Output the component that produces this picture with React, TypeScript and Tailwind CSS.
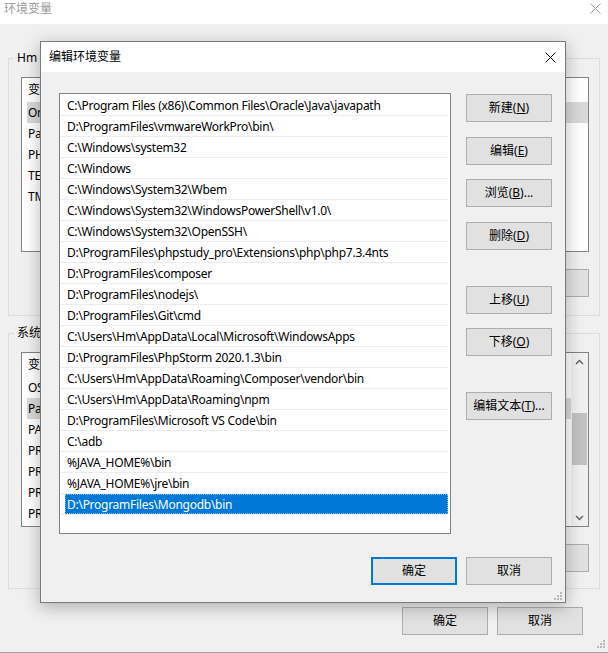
import React from 'react';

const paths = [
  'C:\\Program Files (x86)\\Common Files\\Oracle\\Java\\javapath',
  'D:\\ProgramFiles\\vmwareWorkPro\\bin\\',
  'C:\\Windows\\system32',
  'C:\\Windows',
  'C:\\Windows\\System32\\Wbem',
  'C:\\Windows\\System32\\WindowsPowerShell\\v1.0\\',
  'C:\\Windows\\System32\\OpenSSH\\',
  'D:\\ProgramFiles\\phpstudy_pro\\Extensions\\php\\php7.3.4nts',
  'D:\\ProgramFiles\\composer',
  'D:\\ProgramFiles\\nodejs\\',
  'D:\\ProgramFiles\\Git\\cmd',
  'C:\\Users\\Hm\\AppData\\Local\\Microsoft\\WindowsApps',
  'D:\\ProgramFiles\\PhpStorm 2020.1.3\\bin',
  'C:\\Users\\Hm\\AppData\\Roaming\\Composer\\vendor\\bin',
  'C:\\Users\\Hm\\AppData\\Roaming\\npm',
  'D:\\ProgramFiles\\Microsoft VS Code\\bin',
  'C:\\adb',
  '%JAVA_HOME%\\bin',
  '%JAVA_HOME%\\jre\\bin',
  'D:\\ProgramFiles\\Mongodb\\bin',
];

const userVars = ['OneDrive', 'Path', 'PHPSTORM', 'TEMP', 'TMP'];
const sysVars = ['OS', 'Path', 'PATHEXT', 'PROCESSOR_ARCHITECTURE', 'PROCESSOR_IDENTIFIER', 'PROCESSOR_LEVEL', 'PROCESSOR_REVISION'];

const CloseIcon: React.FC<{ className?: string }> = ({ className }) => (
  <svg className={className} width="11" height="11" viewBox="0 0 11 11" fill="none" stroke="currentColor" strokeWidth="1">
    <path d="M0.5 0.5L10.5 10.5M10.5 0.5L0.5 10.5" />
  </svg>
);

const Grip: React.FC = () => (
  <svg width="9" height="9" viewBox="0 0 9 9" className="text-[#b8b8b8]" fill="currentColor">
    <rect x="6" y="0" width="2" height="2" />
    <rect x="3" y="3" width="2" height="2" />
    <rect x="6" y="3" width="2" height="2" />
    <rect x="0" y="6" width="2" height="2" />
    <rect x="3" y="6" width="2" height="2" />
    <rect x="6" y="6" width="2" height="2" />
  </svg>
);

const WinButton: React.FC<{ children: React.ReactNode; className?: string; focused?: boolean }> = ({ children, className = '', focused }) => (
  <div
    className={`w-[86px] h-[28px] flex items-center justify-center bg-[#e1e1e1] text-[12px] text-black ${
      focused ? 'border-2 border-[#0078d7]' : 'border border-[#adadad]'
    } ${className}`}
  >
    {children}
  </div>
);

const VarList: React.FC<{ items: string[]; selected: number; scroll?: boolean }> = ({ items, selected, scroll }) => (
  <div className="h-[175px] bg-white border border-[#828282] flex overflow-hidden">
    <div className="flex-1 flex flex-col">
      <div className="h-[24px] flex items-center pl-[6px] text-[12px]">变量</div>
      {items.map((v, i) => (
        <div key={v + i} className="h-[21px] flex">
          <div className={`ml-[5px] flex-1 flex items-center pl-[1px] text-[12px] tracking-[-0.27px] ${i === selected ? 'bg-[#d9d9d9]' : ''}`}>{v}</div>
        </div>
      ))}
    </div>
    {scroll && (
      <div className="w-[17px] bg-[#f0f0f0] flex flex-col items-center">
        <div className="h-[17px] flex items-center justify-center text-[#606060]">
          <svg width="9" height="6" viewBox="0 0 9 6" fill="none" stroke="currentColor" strokeWidth="1.4"><path d="M1 5L4.5 1.5L8 5" /></svg>
        </div>
        <div className="mt-[43px] w-[15px] h-[52px] bg-[#c2c2c2]" />
        <div className="flex-1" />
        <div className="h-[17px] flex items-center justify-center text-[#606060]">
          <svg width="9" height="6" viewBox="0 0 9 6" fill="none" stroke="currentColor" strokeWidth="1.4"><path d="M1 1L4.5 4.5L8 1" /></svg>
        </div>
      </div>
    )}
  </div>
);

const GroupBox: React.FC<{ legend: string; children: React.ReactNode; className?: string }> = ({ legend, children, className = '' }) => (
  <div className={`relative border border-[#dcdcdc] pl-[12px] pr-[10px] pt-[18px] ${className}`}>
    <span className="absolute -top-[9px] left-[5px] px-[3px] bg-[#f0f0f0] text-[12px] leading-[16px]">{legend}</span>
    {children}
  </div>
);

const App: React.FC = () => {
  return (
    <div className="relative w-[608px] h-[653px] overflow-hidden bg-[#f0f0f0] text-black font-['Noto_Sans','Noto_Sans_CJK_SC',sans-serif] border-b border-[#a0a0a0]">
      {/* parent window */}
      <div className="h-[24px] bg-white flex items-start justify-between pl-[4px] pr-[7px]">
        <span className="mt-[1px] text-[12px] leading-[16px] text-[#9a9a9a]">环境变量</span>
        <CloseIcon className="mt-[3px] text-[#9a9a9a]" />
      </div>
      <div className="px-[8px]">
        <GroupBox legend="Hm 的用户变量(U)" className="mt-[34px] pb-[18px]">
          <VarList items={userVars} selected={0} />
          <div className="mt-[17px] flex justify-end gap-[9px]">
            <WinButton className="h-[27px]">新建(<u>N</u>)...</WinButton>
            <WinButton className="h-[27px]">编辑(<u>E</u>)...</WinButton>
            <WinButton className="h-[27px]">删除(<u>D</u>)</WinButton>
          </div>
        </GroupBox>
        <GroupBox legend="系统变量(S)" className="mt-[17px] pb-[16px]">
          <VarList items={sysVars} selected={1} scroll />
          <div className="mt-[17px] flex justify-end gap-[9px]">
            <WinButton>新建(<u>W</u>)...</WinButton>
            <WinButton>编辑(<u>I</u>)...</WinButton>
            <WinButton>删除(<u>L</u>)</WinButton>
          </div>
        </GroupBox>
        <div className="mt-[18px] pr-[17px] flex justify-end gap-[9px]">
          <WinButton>确定</WinButton>
          <WinButton>取消</WinButton>
        </div>
      </div>
      <div className="absolute right-[2px] bottom-[3px]">
        <Grip />
      </div>

      {/* edit dialog */}
      <div className="absolute left-[40px] top-[41px] w-[526px] h-[562px] border border-[#7a7a7a] bg-[#f0f0f0] shadow-[0_4px_16px_rgba(0,0,0,0.28)] flex flex-col">
        <div className="h-[30px] bg-white flex items-center justify-between pl-[8px] pr-[9px]">
          <span className="text-[12px]">编辑环境变量</span>
          <CloseIcon className="text-black" />
        </div>
        <div className="flex-1 flex flex-col pl-[18px] pr-[13px] pt-[21px]">
          <div className="flex gap-[15px]">
            <div className="w-[392px] h-[441px] bg-white border border-[#828282] pt-[1px] pr-[2px]">
              {paths.map((p, i) => (
                <div key={p} className="h-[21px] border-b border-[#ececec] flex">
                  {i === paths.length - 1 ? (
                    <div className="ml-[5px] flex-1 bg-[#0078d7] outline outline-1 outline-dotted outline-[#7fb7e6] -outline-offset-1 text-white text-[12px] leading-[21px] pl-[2px] tracking-[-0.27px] whitespace-nowrap">
                      {p}
                    </div>
                  ) : (
                    <div className="ml-[5px] flex-1 text-[12px] leading-[21px] pl-[2px] tracking-[-0.27px] whitespace-nowrap">{p}</div>
                  )}
                </div>
              ))}
            </div>
            <div className="flex flex-col pt-[1px]">
              <WinButton>新建(<u>N</u>)</WinButton>
              <WinButton className="mt-[15px]">编辑(<u>E</u>)</WinButton>
              <WinButton className="mt-[14px]">浏览(<u>B</u>)...</WinButton>
              <WinButton className="mt-[15px]">删除(<u>D</u>)</WinButton>
              <WinButton className="mt-[36px]">上移(<u>U</u>)</WinButton>
              <WinButton className="mt-[14px]">下移(<u>O</u>)</WinButton>
              <WinButton className="mt-[36px]">编辑文本(<u>T</u>)...</WinButton>
            </div>
          </div>
          <div className="mt-[23px] flex justify-end gap-[9px]">
            <WinButton focused>确定</WinButton>
            <WinButton>取消</WinButton>
          </div>
          <div className="flex-1" />
          <div className="flex justify-end -mr-[11px] mb-[1px]">
            <Grip />
          </div>
        </div>
      </div>
    </div>
  );
};

export default App;
